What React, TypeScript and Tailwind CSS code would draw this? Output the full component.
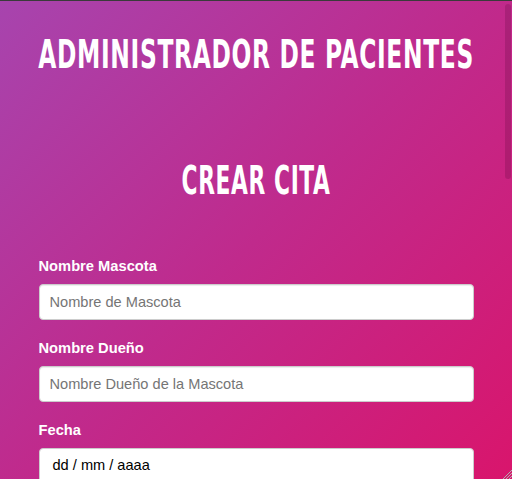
import React from "react";

export default function App() {
  return (
    <div className="relative w-[512px] h-[479px] overflow-hidden border-t border-[#3a3a3a] bg-[linear-gradient(135deg,#a744ae_0%,#c02a8c_50%,#d9156c_100%)] font-['Liberation_Sans',Arial,sans-serif]">
      <h1 className="mt-[34px] flex justify-center leading-none text-white font-bold text-[39px] font-['DejaVu_Sans_Condensed',sans-serif] uppercase whitespace-nowrap">
        <span className="inline-block shrink-0 scale-x-[0.666] tracking-[1px]">Administrador de Pacientes</span>
      </h1>
      <h2 className="mt-[87px] flex justify-center leading-none text-white font-bold text-[39px] font-['DejaVu_Sans_Condensed',sans-serif] uppercase whitespace-nowrap">
        <span className="inline-block shrink-0 scale-x-[0.62] tracking-[1px]">Crear Cita</span>
      </h2>
      <form className="mx-auto mt-[57px] w-[435px] flex flex-col">
        <label className="block text-white font-bold text-[14.7px] leading-[18px] mb-[9px]">Nombre Mascota</label>
        <input
          className="block w-full h-[36px] rounded-[4px] border border-[#cccccc] bg-white px-[10px] text-[14.6px] text-black placeholder:text-[#757575] shadow-[inset_0_1px_1px_rgba(0,0,0,0.075)] outline-none"
          placeholder="Nombre de Mascota"
        />
        <label className="block mt-[19px] text-white font-bold text-[14.7px] leading-[18px] mb-[9px]">Nombre Dueño</label>
        <input
          className="block w-full h-[36px] rounded-[4px] border border-[#cccccc] bg-white px-[10px] text-[14.6px] text-black placeholder:text-[#757575] shadow-[inset_0_1px_1px_rgba(0,0,0,0.075)] outline-none"
          placeholder="Nombre Dueño de la Mascota"
        />
        <label className="block mt-[19px] text-white font-bold text-[14.7px] leading-[18px] mb-[9px]">Fecha</label>
        <div className="flex items-center w-full h-[36px] rounded-[4px] border border-[#cccccc] bg-white pl-[13px] text-[14.6px] text-black">
          dd / mm / aaaa
        </div>
      </form>
      <div className="absolute right-[1px] top-[3px] w-[6px] h-[175px] rounded-[3px] bg-[rgba(60,0,40,0.18)]" />
      <svg className="absolute right-0 bottom-0" width="10" height="10" viewBox="0 0 10 10">
        <line x1="10" y1="1" x2="1" y2="10" stroke="#b0b0b0" strokeWidth="1" />
        <line x1="10" y1="4" x2="4" y2="10" stroke="#b0b0b0" strokeWidth="1" />
        <line x1="10" y1="7" x2="7" y2="10" stroke="#b0b0b0" strokeWidth="1" />
      </svg>
    </div>
  );
}
